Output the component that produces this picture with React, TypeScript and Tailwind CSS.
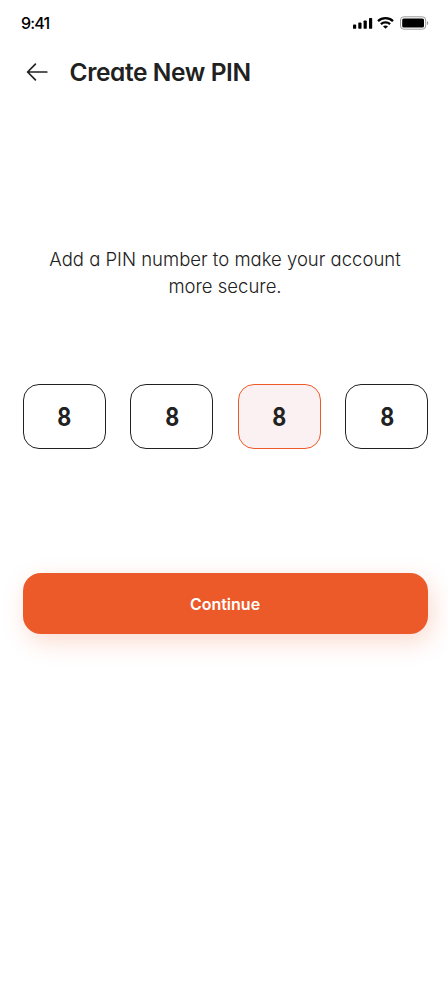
import React from 'react';

const digits = ['8', '8', '8', '8'];
const activeIndex = 2;

function StatusIcons() {
  return (
    <div className="flex items-center">
      <svg width="20" height="12" viewBox="0 0 20 12" fill="#000">
        <rect x="0" y="7.6" width="3.2" height="4.2" rx="0.9" />
        <rect x="5.3" y="5.6" width="3.2" height="6.2" rx="0.9" />
        <rect x="10.6" y="3.4" width="3.2" height="8.4" rx="0.9" />
        <rect x="16" y="1" width="3.2" height="10.8" rx="0.9" />
      </svg>
      <svg className="ml-1" width="17" height="12" viewBox="0 0 17 12" fill="none" stroke="#000">
        <path d="M1 4.2C5.2 0.2 11.8 0.2 16 4.2" strokeWidth="2.3" />
        <path d="M3.9 7.1C6.5 4.7 10.5 4.7 13.1 7.1" strokeWidth="2.3" />
        <path d="M8.5 11.7L6 9.3C7.4 8.1 9.6 8.1 11 9.3Z" fill="#000" stroke="none" />
      </svg>
      <svg className="ml-1.5" width="29" height="14" viewBox="0 0 29 14" fill="none">
        <rect x="0.5" y="0.8" width="25.2" height="12.4" rx="3.2" stroke="#9b9b9b" />
        <rect x="2.2" y="2.5" width="21.8" height="9" rx="1.5" fill="#000" />
        <path d="M27 5V9.2C28.7 8.5 28.7 5.7 27 5Z" fill="#9b9b9b" />
      </svg>
    </div>
  );
}

export default function App() {
  return (
    <main className="flex h-[984px] w-[448px] flex-col overflow-hidden bg-white font-['Inter','Liberation_Sans',sans-serif] text-[#212121] [font-feature-settings:'cv11']">
      <div className="flex h-[46px] items-center justify-between pl-[21px] pr-[19px]">
        <span className="text-[16px] font-medium leading-none tracking-[-0.8px] text-black">9:41</span>
        <StatusIcons />
      </div>
      <header className="flex h-[52px] items-center pl-[26px]">
        <svg width="22" height="20" viewBox="0 0 22 20" fill="none" stroke="#212121" strokeWidth="1.7" strokeLinecap="round" strokeLinejoin="round">
          <path d="M20.8 10H1.6M9.4 2.2L1.6 10L9.4 17.8" />
        </svg>
        <h1 className="ml-[21.5px] whitespace-nowrap pt-px text-[24.5px] font-semibold leading-none tracking-[-0.4px]">Create New PIN</h1>
      </header>
      <p className="mt-[148px] pl-[2px] text-center text-[18.5px] font-light leading-[27px]">
        Add a PIN number to make your account
        <br />
        more secure.
      </p>
      <div className="ml-[22.5px] mt-[84px] flex w-[406px] justify-between">
        {digits.map((digit, i) => (
          <div
            key={i}
            className={`flex h-[65px] w-[83px] items-center justify-center rounded-[16px] border pt-0.5 text-[25px] font-bold ${i === activeIndex ? 'border-[#ec5a29] bg-[#fcf1f2]' : 'border-[#212121]'}`}
          >
            <span className="inline-block scale-x-[0.86]">{digit}</span>
          </div>
        ))}
      </div>
      <button className="ml-[22.5px] mt-[123.5px] h-[61.5px] w-[405px] rounded-[18px] bg-[#ec5a29] pt-0.5 text-[16px] font-semibold text-white shadow-[4px_8px_24px_rgba(236,90,41,0.22)]">
        Continue
      </button>
    </main>
  );
}
